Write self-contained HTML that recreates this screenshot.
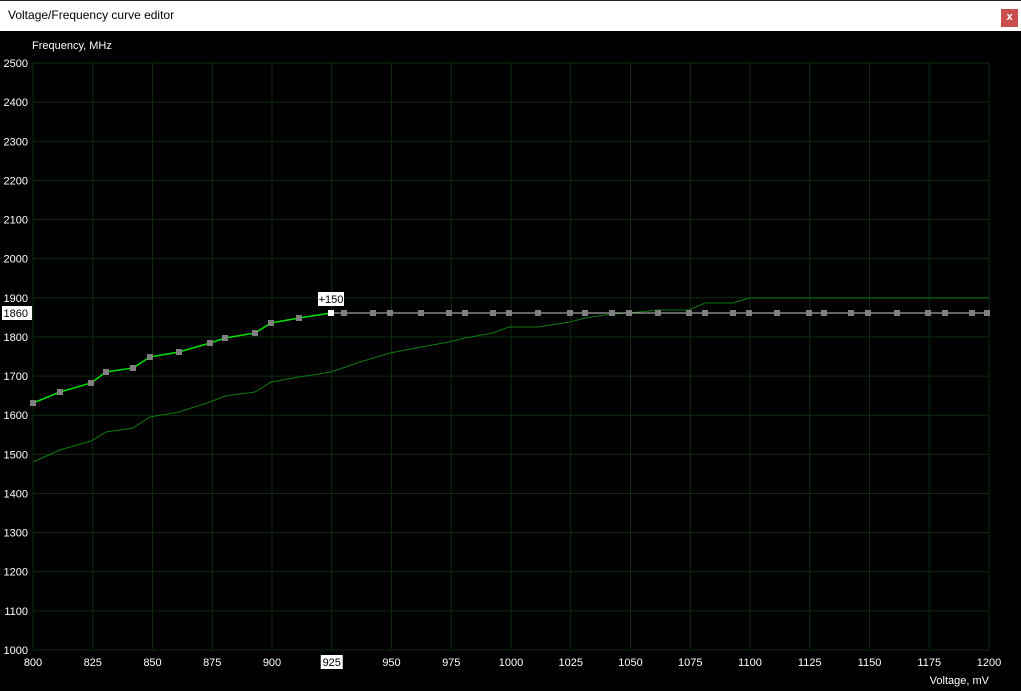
<!DOCTYPE html>
<html><head><style>
body{margin:0;width:1021px;height:691px;background:#000;overflow:hidden;font-family:"Liberation Sans",sans-serif}
.tb{position:absolute;left:0;top:0;width:1021px;height:31px;background:#fff;border-top:1px solid #222;box-sizing:border-box}
.tb span{position:absolute;left:8px;top:7px;font-size:12px;color:#000}
.x{position:absolute;left:1001px;top:8px;width:17px;height:18px;background:#c94f4f;color:#fff;font-size:11px;font-weight:bold;text-align:center;line-height:17px}
svg{position:absolute;left:0;top:0}
text{font-family:"Liberation Sans",sans-serif;font-size:11px;fill:#fff}
</style></head><body>
<div class="tb"><span>Voltage/Frequency curve editor</span><div class="x">x</div></div>
<svg width="1021" height="691" id="s"></svg>
<script>
const s=document.getElementById('s');let h='';
const L=33,R=989,T=63,B=650;
const X=v=>L+(v-800)/400*(R-L), Y=f=>B-(f-1000)/1500*(B-T);
for(let v=800;v<=1200;v+=25){const x=X(v);h+=`<line x1="${x}" y1="${T}" x2="${x}" y2="${B}" stroke="#0d2a0d"/>`;
 if(v==925)h+=`<rect x="${x-11}" y="655" width="22" height="14" fill="#fff"/><text x="${x}" y="666" text-anchor="middle" style="fill:#000">${v}</text>`;
 else h+=`<text x="${x}" y="666" text-anchor="middle">${v}</text>`;}
for(let f=1000;f<=2500;f+=100){const y=Y(f);h+=`<line x1="${L}" y1="${y}" x2="${R}" y2="${y}" stroke="#0d2a0d"/><text x="28" y="${y+4}" text-anchor="end">${f}</text>`;}
h+=`<text x="32" y="49">Frequency, MHz</text><text x="989" y="684" text-anchor="end">Voltage, mV</text>`;
const d=[[33,462],[60,450],[91,441],[106,432],[133,428],[150,417],[179,412],[210,402],[225,396],[255,392],[271,382],[299,377],[331,372],[360,362],[390,353],[421,347],[449,342],[465,338],[493,333],[509,327],[538,327],[570,322],[585,318],[612,314],[629,313],[658,310],[689,310],[705,303],[733,303],[749,298],[989,298]];
h+=`<polyline fill="none" stroke="#0c7a0c" points="${d.map(p=>p.join(',')).join(' ')}"/>`;
const g=[[33,403],[60,392],[91,383],[106,372],[133,368],[150,357],[179,352],[210,343],[225,338],[255,333],[271,323],[299,318],[331,313]];
h+=`<polyline fill="none" stroke="#00e000" stroke-width="1.5" points="${g.map(p=>p.join(',')).join(' ')}"/>`;
h+=`<line x1="331" y1="313" x2="989" y2="313" stroke="#c8c8c8"/>`;
g.slice(0,-1).forEach(p=>h+=`<rect x="${p[0]-3}" y="${p[1]-3}" width="6" height="6" fill="#808080"/>`);
[344,373,390,421,449,465,493,509,538,570,585,612,629,658,689,705,733,749,777,809,824,851,868,897,928,945,972,987].forEach(x=>h+=`<rect x="${x-3}" y="310" width="6" height="6" fill="#808080"/>`);
h+=`<rect x="328" y="310" width="6" height="6" fill="#fff"/>`;
h+=`<rect x="318" y="292" width="26" height="14" fill="#fff"/><text x="331" y="303" text-anchor="middle" style="fill:#000">+150</text>`;
h+=`<rect x="2" y="306" width="30" height="14" fill="#fff"/><text x="28" y="317" text-anchor="end" style="fill:#000">1860</text>`;
s.innerHTML=h;
</script>
</body></html>
